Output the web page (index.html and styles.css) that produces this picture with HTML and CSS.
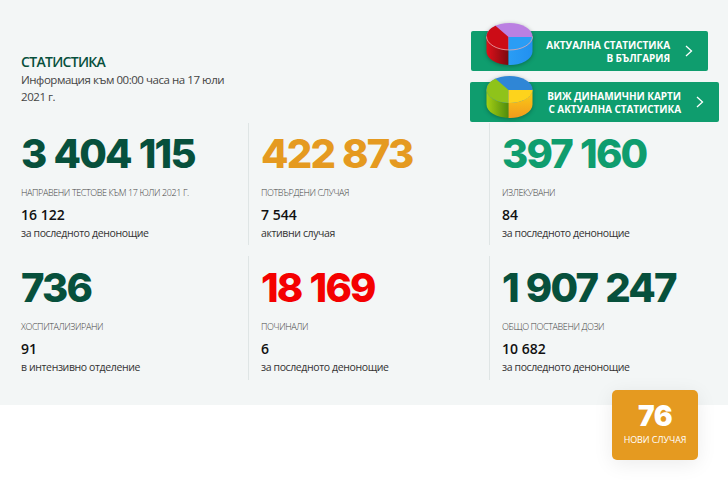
FILE: index.html
```html
<!DOCTYPE html>
<html lang="en">
<head>
    <meta charset="UTF-8">
    <meta name="viewport" content="width=device-width, initial-scale=1.0">
    <title>Статистика</title>
    <link rel="stylesheet" href="styles.css">
</head>
<body>
    <section class="stats">
        <div class="top">
            <div class="intro">
                <h2>СТАТИСТИКА</h2>
                <p>Информация към 00:00 часа на 17 юли 2021 г.</p>
            </div>
            <div class="links">
                <a class="link link-one" href="#">
                    <svg class="pie" viewBox="0 0 46 42">
                        <defs>
                            <linearGradient id="red-side" x1="0" x2="1" y1="0" y2="0"><stop offset="0" stop-color="#e0101a"/><stop offset="1" stop-color="#7c0a10"/></linearGradient>
                            <linearGradient id="blue-side" x1="0" x2="1" y1="0" y2="0"><stop offset="0" stop-color="#2a9df5"/><stop offset="1" stop-color="#2290f0"/></linearGradient>
                        </defs>
                        <path d="M0 13.5V28.5A23 13.5 0 0 0 22 42V20Z" fill="url(#red-side)"/>
                        <path d="M22 20V42A23 13.5 0 0 0 46 28.5V13.5Z" fill="url(#blue-side)"/>
                        <ellipse cx="23" cy="13.5" rx="23" ry="13.5" fill="#bb80e2"/>
                        <path d="M22 14L9 2.8A23 13.5 0 0 0 0 13.5A23 13.5 0 0 0 22 27Z" fill="#cc0c16"/>
                        <path d="M22 14H46A23 13.5 0 0 1 22 27Z" fill="#2a9df5"/>
                        <path d="M0 13.5A23 13.5 0 0 0 46 13.5" fill="none" stroke="#f4b0a8" stroke-width=".7"/>
                    </svg>
                    <span class="link-text">АКТУАЛНА СТАТИСТИКА<br>В БЪЛГАРИЯ</span>
                    <svg class="arrow" viewBox="0 0 8 12"><path d="M1 1l5.5 5L1 11" fill="none" stroke="#fff" stroke-width="1.3"/></svg>
                </a>
                <a class="link link-two" href="#">
                    <svg class="pie" viewBox="0 0 46 42">
                        <defs>
                            <linearGradient id="green-side" x1="0" x2="1" y1="0" y2="0"><stop offset="0" stop-color="#a6cf14"/><stop offset="1" stop-color="#4f8c0c"/></linearGradient>
                            <linearGradient id="yellow-side" x1="0" x2="0" y1="0" y2="1"><stop offset="0" stop-color="#fcd116"/><stop offset="1" stop-color="#f29a1c"/></linearGradient>
                        </defs>
                        <path d="M0 13.5V28.5A23 13.5 0 0 0 22 42V20Z" fill="url(#green-side)"/>
                        <path d="M22 20V42A23 13.5 0 0 0 46 28.5V13.5Z" fill="url(#yellow-side)"/>
                        <ellipse cx="23" cy="13.5" rx="23" ry="13.5" fill="#2f86d6"/>
                        <path d="M22 14L9 2.8A23 13.5 0 0 0 0 13.5A23 13.5 0 0 0 22 27Z" fill="#8fc31a"/>
                        <path d="M22 14H46A23 13.5 0 0 1 22 27Z" fill="#fdd31c"/>
                    </svg>
                    <span class="link-text">ВИЖ ДИНАМИЧНИ КАРТИ<br>С АКТУАЛНА СТАТИСТИКА</span>
                    <svg class="arrow" viewBox="0 0 8 12"><path d="M1 1l5.5 5L1 11" fill="none" stroke="#fff" stroke-width="1.3"/></svg>
                </a>
            </div>
        </div>
        <div class="grid">
            <div class="item">
                <div class="num green">3 404 115</div>
                <div class="label">НАПРАВЕНИ ТЕСТОВЕ КЪМ 17 ЮЛИ 2021 Г.</div>
                <div class="value">16 122</div>
                <div class="note">за последното денонощие</div>
            </div>
            <div class="item">
                <div class="num orange">422 873</div>
                <div class="label">ПОТВЪРДЕНИ СЛУЧАЯ</div>
                <div class="value">7 544</div>
                <div class="note">активни случая</div>
            </div>
            <div class="item">
                <div class="num teal">397 160</div>
                <div class="label">ИЗЛЕКУВАНИ</div>
                <div class="value">84</div>
                <div class="note">за последното денонощие</div>
            </div>
            <div class="item">
                <div class="num green">736</div>
                <div class="label">ХОСПИТАЛИЗИРАНИ</div>
                <div class="value">91</div>
                <div class="note">в интензивно отделение</div>
            </div>
            <div class="item">
                <div class="num red">18 169</div>
                <div class="label">ПОЧИНАЛИ</div>
                <div class="value">6</div>
                <div class="note">за последното денонощие</div>
            </div>
            <div class="item">
                <div class="num green">1 907 247</div>
                <div class="label">ОБЩО ПОСТАВЕНИ ДОЗИ</div>
                <div class="value">10 682</div>
                <div class="note">за последното денонощие</div>
            </div>
        </div>
    </section>
    <div class="badge">
        <div class="badge-num">76</div>
        <div class="badge-text">НОВИ СЛУЧАЯ</div>
    </div>
</body>
</html>
```

FILE: styles.css
```css
body {
    font-family: "Open Sans", "Noto Sans", sans-serif;
    margin: 0;
    padding: 0;
    background-color: #fff;
    height: 485px;
    overflow: hidden;
    position: relative;
}
.stats {
    background-color: #f3f6f6;
    height: 405px;
    box-sizing: border-box;
    padding: 31px 9px 0 21px;
}
.top {
    display: flex;
    justify-content: space-between;
    height: 92px;
}
.intro {
    width: 225px;
    padding-top: 22px;
}
.intro h2 {
    margin: 0;
    font-size: 14px;
    line-height: 18px;
    font-weight: 600;
    letter-spacing: -0.7px;
    color: #07503c;
}
.intro p {
    margin: 0;
    font-size: 11.5px;
    line-height: 17px;
    letter-spacing: -0.45px;
    color: #444;
}
.links {
    display: flex;
    flex-direction: column;
    align-items: flex-end;
    gap: 11px;
}
.link {
    position: relative;
    display: flex;
    align-items: center;
    justify-content: flex-end;
    width: 249px;
    height: 40px;
    box-sizing: border-box;
    padding-right: 15px;
    background-color: #0f9d6e;
    border-radius: 2px;
    color: #fff;
    text-decoration: none;
}
.link-one {
    width: 237px;
    margin-right: 11px;
}
.pie {
    position: absolute;
    left: 15px;
    top: -8px;
    width: 47px;
    height: 42px;
    filter: drop-shadow(0 1px 2px rgba(0, 0, 0, 0.3));
}
.link-two .pie {
    left: 16px;
    top: -6px;
}
.link-text {
    font-size: 10px;
    line-height: 13px;
    font-weight: 700;
    letter-spacing: -0.05px;
    text-align: right;
    padding-top: 2px;
}
.arrow {
    width: 8px;
    height: 12px;
    margin-left: 15px;
}
.grid {
    display: grid;
    grid-template-columns: 240px 241px 1fr;
    grid-template-rows: 122px 124px;
    row-gap: 11px;
}
.item {
    box-sizing: border-box;
    padding-top: 9px;
    border-right: 1px solid #dfe5e5;
    margin-right: 12px;
}
.item:nth-child(n+4) {
    padding-top: 10px;
}
.item:nth-child(3n) {
    border-right: none;
}
.num {
    font-family: Inter, "Open Sans", sans-serif;
    font-size: 40px;
    line-height: 44px;
    font-weight: 800;
    letter-spacing: -1.8px;
    word-spacing: 1px;
    white-space: nowrap;
}
.green {
    color: #07503c;
}
.teal {
    color: #0f9d6e;
}
.orange {
    color: #e59a20;
}
.red {
    color: #f40000;
}
.label {
    margin-top: 11px;
    font-size: 9px;
    line-height: 12px;
    font-weight: 300;
    letter-spacing: -0.4px;
    color: #444;
    white-space: nowrap;
}
.value {
    margin-top: 6px;
    font-size: 14px;
    line-height: 19px;
    font-weight: 600;
    color: #111;
}
.note {
    font-size: 10.5px;
    line-height: 18px;
    letter-spacing: -0.38px;
    color: #333;
}
.badge {
    position: absolute;
    left: 612px;
    top: 390px;
    width: 86px;
    height: 70px;
    box-sizing: border-box;
    padding-top: 9px;
    background-color: #e59a20;
    border-radius: 5px;
    box-shadow: 0 4px 20px rgba(0, 0, 0, 0.08);
    color: #fff;
    text-align: center;
}
.badge-num {
    font-family: Inter, "Open Sans", sans-serif;
    font-size: 28px;
    line-height: 34px;
    font-weight: 900;
    letter-spacing: -0.5px;
}
.badge-text {
    margin-top: 1px;
    font-size: 9px;
    line-height: 12px;
    font-weight: 400;
    letter-spacing: -0.1px;
}
```
